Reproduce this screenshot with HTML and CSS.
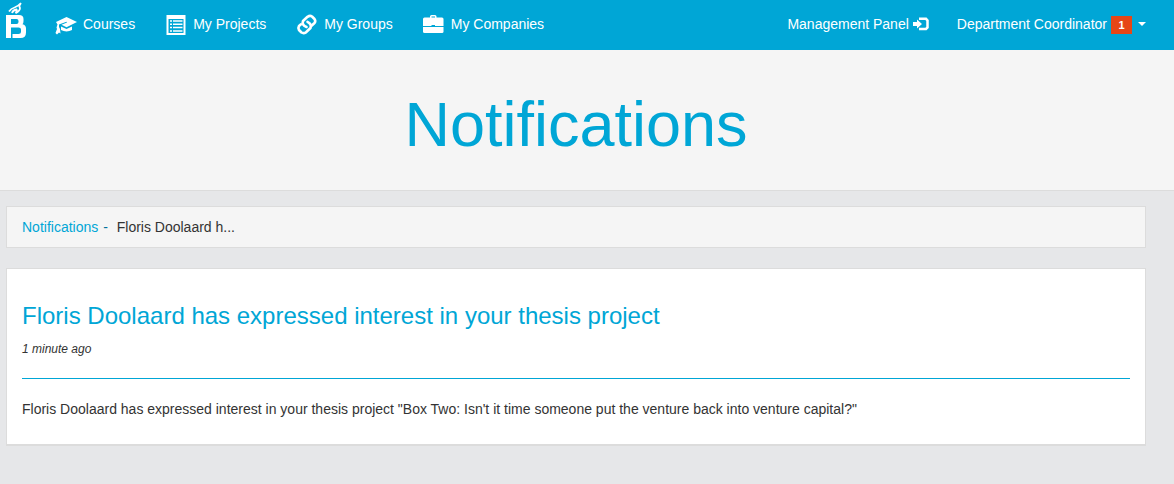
FILE: index.html
```html
<!DOCTYPE html>
<html lang="en">
<head>
  <meta charset="UTF-8">
  <meta name="viewport" content="width=device-width, initial-scale=1">
  <title>Notifications</title>
  <link rel="stylesheet" href="styles.css">
</head>
<body>

  <!-- Navigation -->
  <nav class="navbar">
    <a class="brand" href="#" aria-label="Home">
      <svg width="21" height="38" viewBox="0 0 21 38">
        <path fill="none" stroke="#fff" stroke-width="1.800" d="M3 11.500Q5 8.500 8.500 7.500Q12.500 6 15 3M15 3Q12.500 6 14 8Q14 11 9.500 13.200M9.500 13Q11.500 10.500 10.500 9.500Q7 10 6 13"/>
        <path fill="#fff" fill-rule="evenodd" d="M0 15H13Q17.500 15 17.500 19V21Q17.500 23.500 16.500 24.200Q20 25 20 28.500V32.500Q20 38 14.500 38H6.500V34H12.500Q15 34 15 32V29.500Q15 27.500 12.500 27.500H5V38H0ZM5 19V24H10.500Q12.500 24 12.500 22V21Q12.500 19 10.500 19Z"/>
      </svg>
    </a>
    <ul class="nav">
      <li>
        <a href="#">
          <svg class="icon" viewBox="0 0 24 24">
            <path fill="#fff" d="M11.500 5L22 10L11.500 15.200L6.500 12.800L12 10.500L11.500 9.700L4 12.500V15L5 17L5.500 21.500L4 20.500L2 22.500L.5 21L2 17L1.500 15.500L2.500 12.500L1 10Z"/>
            <path fill="#fff" d="M6 14.500L11.500 17L17 14.500V18Q14.500 19 11.500 19.500Q8.500 19 6 18Z"/>
          </svg>
          Courses
        </a>
      </li>
      <li>
        <a href="#">
          <svg class="icon" viewBox="0 0 24 24">
            <path fill="#fff" fill-rule="evenodd" d="M1.500 3H20.500V23H1.500ZM3.500 7V21H18.500V7Z"/>
            <path stroke="#fff" stroke-width="1.500" d="M5 9H7M5 12.300H7M5 15.600H7M5 19H7M8 9H17.500M8 12.300H17.500M8 15.600H17.500M8 19H17.500"/>
          </svg>
          My Projects
        </a>
      </li>
      <li>
        <a href="#">
          <svg class="icon" viewBox="0 0 24 24">
            <g fill="none" stroke="#fff" stroke-width="2.600" stroke-linecap="round" stroke-linejoin="round">
              <path d="M10.500 15Q5.500 13 7 9L11.500 4.800Q14 3.200 16 4.500L18.500 7Q20 9 18.500 11L15.500 13.800"/>
              <path d="M11.500 9.800Q16 12 14.500 16L10 20.300Q7.500 21.800 5.500 20.500L3 18Q1.800 16 3 14L5 12.300"/>
            </g>
          </svg>
          My Groups
        </a>
      </li>
      <li>
        <a href="#">
          <svg class="icon" viewBox="0 0 24 24">
            <path fill="#fff" fill-rule="evenodd" d="M7 5.500V4.500Q7 3 8.500 3H12Q13.500 3 13.500 4.500V5.500H19Q20.500 5.500 20.500 7V14H12V13H8.500V14H0V7Q0 5.500 1.500 5.500ZM8.500 5.500H12V4.500H8.500Z"/>
            <path fill="#fff" d="M0 15H20.500V19.500Q20.500 21 19 21H1.500Q0 21 0 19.500Z"/>
          </svg>
          My Companies
        </a>
      </li>
    </ul>
    <ul class="nav nav-right">
      <li>
        <a href="#">
          Management Panel
          <svg class="icon-small" viewBox="0 0 16 14">
            <path fill="#fff" d="M0 5H4V2.500L9 7L4 11.500V9H0Z"/>
            <path fill="none" stroke="#fff" stroke-width="2.500" d="M6 1.800H13L14.500 3.500V10.500L13 12H6"/>
          </svg>
        </a>
      </li>
      <li>
        <a href="#">
          Department Coordinator
          <span class="badge">1</span>
          <span class="caret"></span>
        </a>
      </li>
    </ul>
  </nav>

  <!-- Page title -->
  <header class="jumbotron">
    <h1>Notifications</h1>
  </header>

  <!-- Main Content -->
  <main class="container">
    <div class="breadcrumb">
      <a href="#">Notifications</a>
      <span class="divider">-</span>
      <span>Floris Doolaard h...</span>
    </div>

    <article class="panel">
      <div class="panel-header">
        <h2>Floris Doolaard has expressed interest in your thesis project</h2>
        <p class="time">1 minute ago</p>
      </div>
      <p>Floris Doolaard has expressed interest in your thesis project "Box Two: Isn't it time someone put the venture back into venture capital?"</p>
    </article>
  </main>

</body>
</html>
```

FILE: styles.css
```css
* {
  box-sizing: border-box;
}

body {
  margin: 0;
  background-color: #e6e7e9;
  color: #333;
  font-family: "Liberation Sans", Arial, sans-serif;
  font-size: 14px;
  line-height: 20px;
}

a {
  color: #00a6d6;
  text-decoration: none;
}

/* Navigation */
.navbar {
  display: flex;
  height: 50px;
  padding: 0 28px 0 6px;
  background-color: #00a6d6;
}

.brand svg {
  display: block;
}

.nav {
  display: flex;
  gap: 30px;
  margin: 0 0 0 28px;
  padding: 0;
  list-style: none;
}

.nav a {
  display: flex;
  align-items: center;
  gap: 4px;
  height: 48px;
  color: #fff;
  white-space: nowrap;
}

.nav-right {
  gap: 28px;
  margin-left: auto;
}

.icon {
  width: 24px;
  height: 24px;
}

.icon-small {
  width: 16px;
  height: 14px;
}

.badge {
  min-width: 21px;
  margin-top: 2px;
  padding: 0 7px;
  background-color: #e64616;
  font-size: 11px;
  font-weight: bold;
  line-height: 18px;
  text-align: center;
}

.caret {
  margin-left: 2px;
  border-top: 4px solid #fff;
  border-right: 4px solid transparent;
  border-left: 4px solid transparent;
}

/* Page title */
.jumbotron {
  padding: 42px 28px 34px 6px;
  border-bottom: 1px solid #dcdcdc;
  background-color: #f5f5f5;
  text-align: center;
}

.jumbotron h1 {
  margin: 0;
  color: #00a6d6;
  font-size: 63px;
  font-weight: normal;
  line-height: 64px;
}

/* Content */
.container {
  padding: 15px 28px 20px 6px;
}

.breadcrumb {
  margin-bottom: 20px;
  padding: 10px 15px;
  border: 1px solid #dcdcdc;
  background-color: #f5f5f5;
}

.divider {
  margin: 0 5px 0 1px;
  color: #00719c;
}

.panel {
  padding: 34px 15px 15px;
  border: 1px solid #dcdcdc;
  background-color: #fff;
  box-shadow: 0 1px 0 #dcdcdc;
}

.panel-header {
  margin-bottom: 20px;
  padding-bottom: 9px;
  border-bottom: 1px solid #00a6d6;
}

.panel h2 {
  margin: 0 0 10px;
  color: #00a6d6;
  font-size: 24px;
  font-weight: normal;
  line-height: 26px;
}

.panel p {
  margin: 0 0 10px;
}

.panel .time {
  font-size: 12px;
  font-style: italic;
}
```
